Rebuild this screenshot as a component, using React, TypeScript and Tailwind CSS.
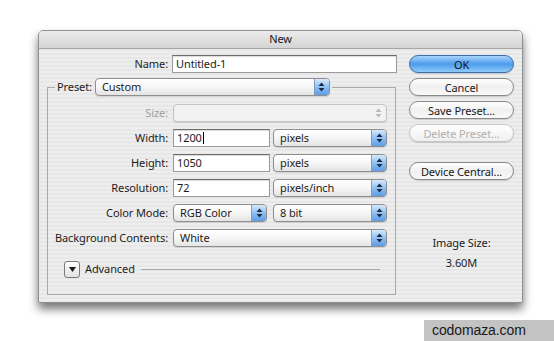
import type { ReactNode } from "react";

// Photoshop "New" document dialog, Mac OS X aqua style.

function Arrows({ disabled }: { disabled?: boolean }) {
  return (
    <svg width="7" height="10" viewBox="0 0 7 10">
      <polygon points="3.5,0.5 6.5,4 0.5,4" fill={disabled ? "#b8b8b8" : "#1d2b44"} />
      <polygon points="0.5,6 6.5,6 3.5,9.5" fill={disabled ? "#b8b8b8" : "#1d2b44"} />
    </svg>
  );
}

function Popup({ label, className, disabled }: { label?: string; className: string; disabled?: boolean }) {
  return (
    <div
      className={`flex h-[18px] items-stretch overflow-hidden rounded-[4px] border ${
        disabled ? "border-[#c4c4c4] bg-[#f2f2f2]" : "border-[#8e8e8e] bg-gradient-to-b from-white via-[#f6f6f6] to-[#e4e4e4]"
      } shadow-[0_1px_1px_rgba(0,0,0,0.12)] ${className}`}
    >
      <span className="flex-1 truncate pl-[6px] leading-[16px]">{label}</span>
      {disabled ? (
        <span className="flex w-[15px] items-center justify-center">
          <Arrows disabled />
        </span>
      ) : (
        <span className="flex w-[15px] items-center justify-center border-l border-[#7f9dc4] bg-gradient-to-b from-[#d8eafc] via-[#8fbff2] to-[#5e9de6]">
          <Arrows />
        </span>
      )}
    </div>
  );
}

function Field({ value, className, caret }: { value: string; className: string; caret?: boolean }) {
  return (
    <div
      className={`flex h-[18px] items-center border border-[#9a9a9a] border-t-[#6c6c6c] bg-white pl-[3px] shadow-[inset_0_1px_1px_rgba(0,0,0,0.15)] ${className}`}
    >
      {value}
      {caret && <span className="ml-[1px] h-[12px] w-px bg-black" />}
    </div>
  );
}

function Row({ label, children, muted }: { label: string; children: ReactNode; muted?: boolean }) {
  return (
    <div className="flex h-[18px] items-center">
      <span className={`w-[120px] text-right ${muted ? "text-[#a0a0a0]" : ""}`}>{label}</span>
      <div className="ml-[5px] flex gap-[3px]">{children}</div>
    </div>
  );
}

function AquaButton({ children, primary, disabled }: { children: ReactNode; primary?: boolean; disabled?: boolean }) {
  const look = primary
    ? "border-[#3f6fa8] bg-gradient-to-b from-[#a9d4fb] via-[#4b9cec] to-[#8fcaf9] text-[#111]"
    : disabled
      ? "border-[#c6c6c6] bg-gradient-to-b from-white to-[#efefef] text-[#b0b0b0]"
      : "border-[#8a8a8a] bg-gradient-to-b from-white via-[#f0f0f0] to-[#fafafa] text-[#1a1a1a]";
  return (
    <div
      className={`flex h-[18px] w-[105px] items-center justify-center rounded-full border leading-none shadow-[0_1px_1px_rgba(0,0,0,0.15)] ${look}`}
    >
      {children}
    </div>
  );
}

export default function App() {
  return (
    <div className="relative h-[341px] w-[554px] overflow-hidden bg-white font-['Noto_Sans',sans-serif] text-[11px] tracking-[-0.1px] text-[#1c1c1c]">
      <div className="ml-[38px] mt-[30px] flex h-[273px] w-[485px] flex-col overflow-hidden rounded-t-[5px] border border-[#909090] bg-[repeating-linear-gradient(to_bottom,#eeeeee_0px,#eeeeee_2px,#e7e7e7_2px,#e7e7e7_4px)] shadow-[0_6px_10px_rgba(0,0,0,0.55)]">
        <div className="flex h-[18px] shrink-0 items-center justify-center border-b border-[#a5a5a5] bg-gradient-to-b from-[#ebebeb] to-[#d4d4d4] text-[#202020]">
          New
        </div>

        <div className="flex flex-1">
          {/* left: form */}
          <div className="w-[358px] pl-[8px] pt-[6px]">
            <div className="flex h-[18px] items-center">
              <span className="w-[121px] text-right">Name:</span>
              <Field value="Untitled-1" className="ml-[4px] w-[225px]" />
            </div>

            <fieldset className="mt-[5px] h-[217px] w-[349px] border border-[#a9a9a9]">
              <legend className="ml-[7px] flex items-center gap-[3px] px-[2px]">
                <span>Preset:</span>
                <Popup label="Custom" className="w-[235px]" />
              </legend>

              <div className="mt-[8px] flex flex-col gap-[7px]">
                <Row label="Size:" muted>
                  <Popup className="w-[214px]" disabled />
                </Row>
                <Row label="Width:">
                  <Field value="1200" caret className="w-[97px]" />
                  <Popup label="pixels" className="w-[114px]" />
                </Row>
                <Row label="Height:">
                  <Field value="1050" className="w-[97px]" />
                  <Popup label="pixels" className="w-[114px]" />
                </Row>
                <Row label="Resolution:">
                  <Field value="72" className="w-[97px]" />
                  <Popup label="pixels/inch" className="w-[114px]" />
                </Row>
                <Row label="Color Mode:">
                  <Popup label="RGB Color" className="w-[94px]" />
                  <Popup label="8 bit" className="ml-[3px] w-[114px]" />
                </Row>
                <Row label="Background Contents:">
                  <Popup label="White" className="w-[214px]" />
                </Row>
              </div>

              <div className="mt-[14px] flex h-[17px] items-center pl-[16px]">
                <span className="flex h-[17px] w-[16px] items-center justify-center rounded-[3px] border border-[#7a7a7a] bg-gradient-to-b from-white to-[#e2e2e2]">
                  <svg width="7" height="5" viewBox="0 0 7 5">
                    <polygon points="0,0 7,0 3.5,5" fill="#1a1a1a" />
                  </svg>
                </span>
                <span className="ml-[5px]">Advanced</span>
                <span className="ml-[6px] h-px w-[239px] bg-[#a8a8a8]" />
              </div>
            </fieldset>
          </div>

          {/* right: buttons */}
          <div className="ml-[12px] flex w-[105px] flex-col pt-[6px]">
            <div className="flex flex-col gap-[5px]">
              <AquaButton primary>OK</AquaButton>
              <AquaButton>Cancel</AquaButton>
              <AquaButton>Save Preset...</AquaButton>
              <AquaButton disabled>Delete Preset...</AquaButton>
            </div>
            <div className="mt-[20px]">
              <AquaButton>Device Central...</AquaButton>
            </div>
            <div className="mt-[55px] text-center leading-[15px]">Image Size:</div>
            <div className="mt-[5px] text-center leading-[15px]">3.60M</div>
          </div>
        </div>
      </div>

      <div className="absolute bottom-0 right-0 flex h-[21px] w-[130px] items-center bg-[#c3c3c3] pl-[8px] font-['Liberation_Sans',sans-serif] text-[14px] text-[#1a1a1a]">
        codomaza.com
      </div>
    </div>
  );
}
